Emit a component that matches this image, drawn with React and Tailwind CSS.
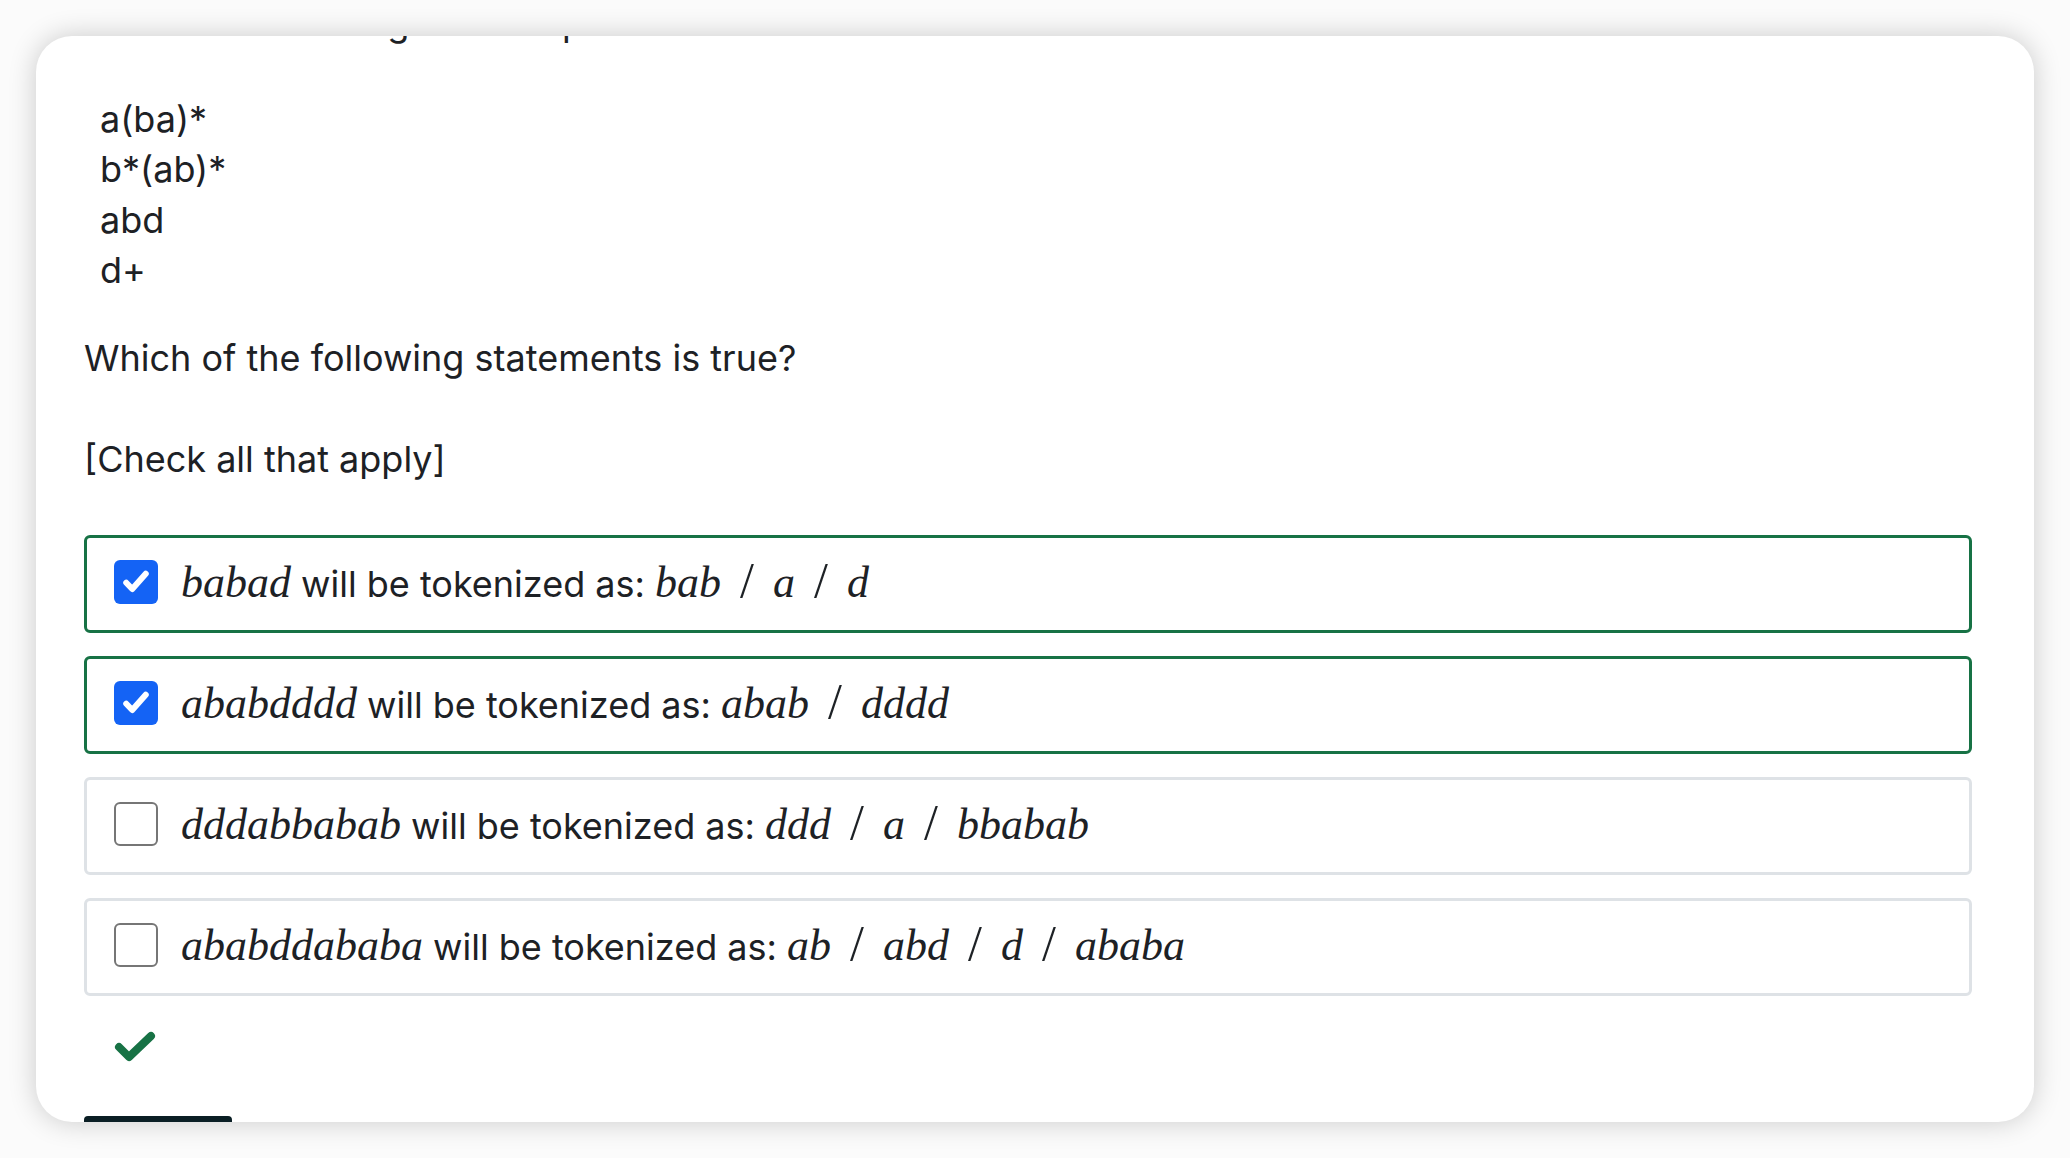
const options = [
  { word: "babad", parts: ["bab", "a", "d"], checked: true },
  { word: "ababdddd", parts: ["abab", "dddd"], checked: true },
  { word: "dddabbabab", parts: ["ddd", "a", "bbabab"], checked: false },
  { word: "ababddababa", parts: ["ab", "abd", "d", "ababa"], checked: false },
];

function MathText({ children }) {
  return (
    <span className="font-['Liberation_Serif',serif] italic text-[44px] leading-none text-[#1d2125]">
      {children}
    </span>
  );
}

function Checkbox({ checked }) {
  if (checked) {
    return (
      <div className="flex h-[44px] w-[44px] shrink-0 items-center justify-center rounded-[6px] bg-[#1463f5]">
        <svg viewBox="0 0 24 24" className="h-[36px] w-[36px]" fill="none">
          <path
            d="M5.5 12.5l4 4.2L18.5 6.5"
            stroke="white"
            strokeWidth="4"
            strokeLinecap="round"
            strokeLinejoin="round"
          />
        </svg>
      </div>
    );
  }
  return (
    <div className="h-[44px] w-[44px] shrink-0 rounded-[6px] border-[2.5px] border-[#767676] bg-white"></div>
  );
}

function Option({ option }) {
  return (
    <div
      className={`flex h-[98px] items-center rounded-[6px] border-[3px] pl-[27px] ${
        option.checked ? "border-[#177245]" : "border-[#dee2e6]"
      }`}
    >
      <div className="-mt-[4px]">
        <Checkbox checked={option.checked} />
      </div>
      <div className="-mt-[4px] ml-[23px] flex items-baseline whitespace-nowrap">
        <MathText>{option.word}</MathText>
        <span className="ml-[10px] mr-[10px]">will be tokenized as:</span>
        {option.parts.map((p, i) => (
          <span key={i} className="flex items-baseline">
            {i > 0 && (
              <span className="mx-[15px] inline-block w-[22px] text-center font-['Liberation_Serif',serif] text-[50px] leading-none font-light">
                /
              </span>
            )}
            <MathText>{p}</MathText>
          </span>
        ))}
      </div>
    </div>
  );
}

export default function App() {
  return (
    <div className="min-h-screen bg-[#fbfbfb] p-[36px] font-['Inter',sans-serif] text-[36px] leading-[50px] text-[#1d2125]">
      <div className="h-[1086px] overflow-hidden rounded-[36px] bg-white pl-[48px] pr-[62px] shadow-[0_0_28px_rgba(0,0,0,0.2)]">
        {/* clipped line from the previous part of the question */}
        <p className="-mt-[38px] whitespace-nowrap">
          Given the following tokens specified in order
        </p>

        <div className="mt-[46px] pl-[16px] leading-[50.4px]">
          <div>a(ba)*</div>
          <div>b*(ab)*</div>
          <div>abd</div>
          <div>d+</div>
        </div>

        <p className="mt-[37px]">Which of the following statements is true?</p>
        <p className="mt-[51px]">[Check all that apply]</p>

        <div className="mt-[51px] flex flex-col gap-[23px]">
          {options.map((o, i) => (
            <Option key={i} option={o} />
          ))}
        </div>

        <div className="mt-[35px] pl-[30px]">
          <svg viewBox="0 0 42 34" className="h-[34px] w-[42px]" fill="none">
            <path
              d="M5 16l10 10L37 5"
              stroke="#177245"
              strokeWidth="8"
              strokeLinecap="round"
              strokeLinejoin="round"
            />
          </svg>
        </div>

        <div className="mt-[51px] h-[40px] w-[148px] rounded-[4px] bg-[#0a1e24]"></div>
      </div>
    </div>
  );
}
